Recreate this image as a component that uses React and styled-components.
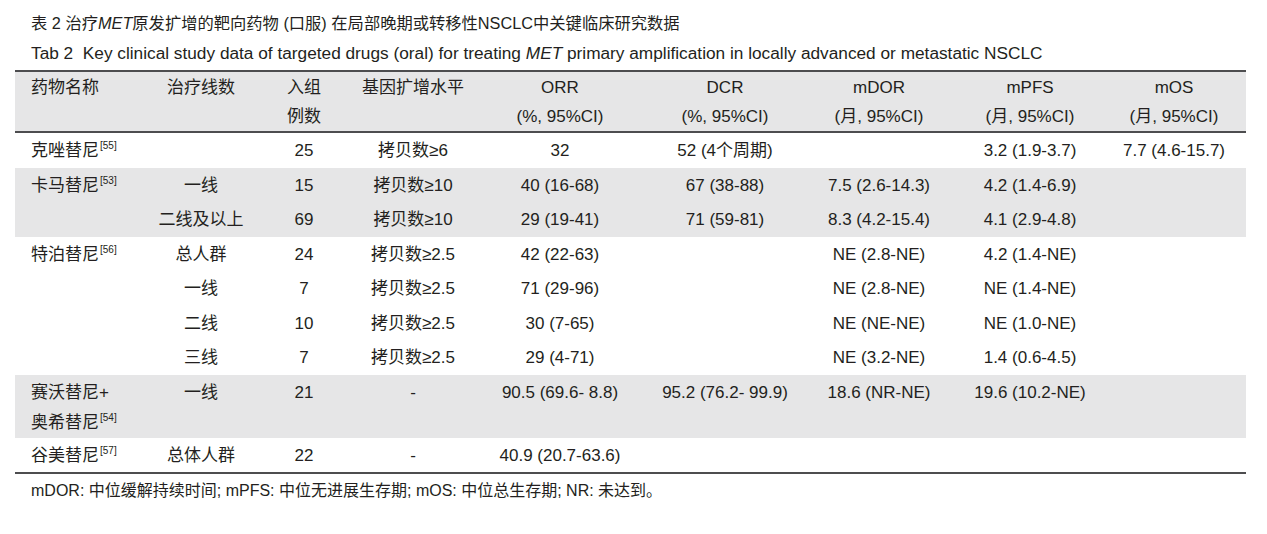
import React from "react";
import styled, { createGlobalStyle } from "styled-components";

const GlobalStyle = createGlobalStyle`
  body {
    margin: 0;
    background: #ffffff;
    color: #231f20;
    font-family: "Liberation Sans", "Noto Sans CJK SC", sans-serif;
  }
`;

const cols = [135, 102, 104, 114, 180, 150, 158, 144, 144];

const groups = [
  {
    shaded: false,
    rows: [
      [["克唑替尼", "55"], "", "25", "拷贝数≥6", "32", "52 (4个周期)", "", "3.2 (1.9-3.7)", "7.7 (4.6-15.7)"],
    ],
  },
  {
    shaded: true,
    rows: [
      [["卡马替尼", "53"], "一线", "15", "拷贝数≥10", "40 (16-68)", "67 (38-88)", "7.5 (2.6-14.3)", "4.2 (1.4-6.9)", ""],
      ["", "二线及以上", "69", "拷贝数≥10", "29 (19-41)", "71 (59-81)", "8.3 (4.2-15.4)", "4.1 (2.9-4.8)", ""],
    ],
  },
  {
    shaded: false,
    rows: [
      [["特泊替尼", "56"], "总人群", "24", "拷贝数≥2.5", "42 (22-63)", "", "NE (2.8-NE)", "4.2 (1.4-NE)", ""],
      ["", "一线", "7", "拷贝数≥2.5", "71 (29-96)", "", "NE (2.8-NE)", "NE (1.4-NE)", ""],
      ["", "二线", "10", "拷贝数≥2.5", "30 (7-65)", "", "NE (NE-NE)", "NE (1.0-NE)", ""],
      ["", "三线", "7", "拷贝数≥2.5", "29 (4-71)", "", "NE (3.2-NE)", "1.4 (0.6-4.5)", ""],
    ],
  },
  {
    shaded: true,
    rows: [
      [["赛沃替尼+", "奥希替尼", "54"], "一线", "21", "-", "90.5 (69.6- 8.8)", "95.2 (76.2- 99.9)", "18.6 (NR-NE)", "19.6 (10.2-NE)", ""],
    ],
  },
  {
    shaded: false,
    rows: [
      [["谷美替尼", "57"], "总体人群", "22", "-", "40.9 (20.7-63.6)", "", "", "", ""],
    ],
  },
];

const Page = styled.div`
  padding: 12px 0 0 15px;
  width: 1231px;
`;

const Caption = styled.div`
  padding-left: 16px;
  font-size: ${(p) => p.$size}px;
  line-height: 22px;
  white-space: nowrap;
  margin-bottom: ${(p) => p.$gap || 0}px;

  em {
    font-style: italic;
  }
`;

const Table = styled.table`
  width: 1231px;
  border-collapse: collapse;
  table-layout: fixed;
  font-size: 17px;
  border-top: 2px solid #4d4d4f;
  border-bottom: 2px solid #4d4d4f;
`;

const Head = styled.thead`
  background: #e6e6e7;
  border-bottom: 2px solid #4d4d4f;
`;

const Th = styled.th`
  font-weight: normal;
  text-align: ${(p) => (p.$left ? "left" : "center")};
  padding: 1px 0 0 ${(p) => (p.$left ? 16 : 0)}px;
  line-height: 29px;
  vertical-align: top;
  height: 58px;
`;

const Group = styled.tbody`
  background: ${(p) => (p.$shaded ? "#e6e6e7" : "#ffffff")};
`;

const Td = styled.td`
  text-align: ${(p) => (p.$left ? "left" : "center")};
  padding: 3px 0 0 ${(p) => (p.$left ? 16 : 0)}px;
  height: 31.5px;
  line-height: 30px;
  vertical-align: top;
`;

const Line = styled.div`
  line-height: 30px;
`;

const Ref = styled.span`
  font-size: 10px;
  line-height: 10px;
  vertical-align: 7px;
  margin-left: 1px;
`;

const Note = styled.div`
  padding-left: 16px;
  margin-top: 6px;
  font-size: 16px;
  line-height: 22px;
`;

const Cell = ({ value, index }) => {
  if (Array.isArray(value)) {
    const lines = value.slice(0, -1);
    const ref = value[value.length - 1];
    return (
      <Td $left>
        {lines.map((text, i) => (
          <Line key={i}>
            {text}
            {i === lines.length - 1 && <Ref>[{ref}]</Ref>}
          </Line>
        ))}
      </Td>
    );
  }
  return <Td $left={index === 0}>{value}</Td>;
};

export default function App() {
  return (
    <Page>
      <GlobalStyle />
      <Caption $size={16.3} $gap={8}>
        表 2 治疗<em>MET</em>原发扩增的靶向药物 (口服) 在局部晚期或转移性NSCLC中关键临床研究数据
      </Caption>
      <Caption $size={17.25} $gap={6}>
        Tab 2 &nbsp;Key clinical study data of targeted drugs (oral) for treating <em>MET</em> primary
        amplification in locally advanced or metastatic NSCLC
      </Caption>
      <Table>
        <colgroup>
          {cols.map((w, i) => (
            <col key={i} style={{ width: w }} />
          ))}
        </colgroup>
        <Head>
          <tr>
            <Th $left>药物名称</Th>
            <Th>治疗线数</Th>
            <Th>入组<br />例数</Th>
            <Th>基因扩增水平</Th>
            <Th>ORR<br />(%, 95%CI)</Th>
            <Th>DCR<br />(%, 95%CI)</Th>
            <Th>mDOR<br />(月, 95%CI)</Th>
            <Th>mPFS<br />(月, 95%CI)</Th>
            <Th>mOS<br />(月, 95%CI)</Th>
          </tr>
        </Head>
        {groups.map((g, gi) => (
          <Group key={gi} $shaded={g.shaded}>
            {g.rows.map((r, ri) => (
              <tr key={ri}>
                {r.map((v, ci) => (
                  <Cell key={ci} value={v} index={ci} />
                ))}
              </tr>
            ))}
          </Group>
        ))}
      </Table>
      <Note>mDOR: 中位缓解持续时间; mPFS: 中位无进展生存期; mOS: 中位总生存期; NR: 未达到。</Note>
    </Page>
  );
}
